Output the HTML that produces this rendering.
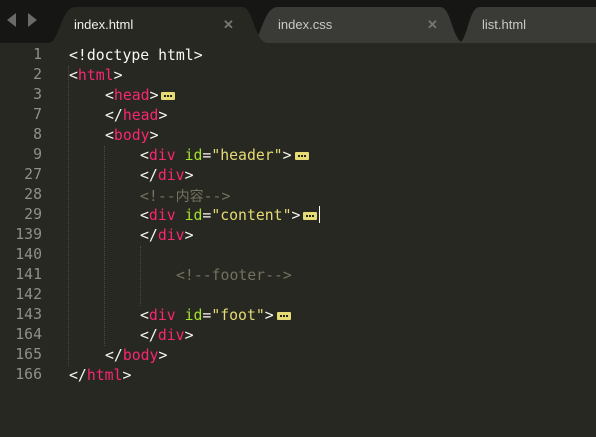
<!DOCTYPE html>
<html><head><style>
html,body{margin:0;padding:0;width:596px;height:437px;overflow:hidden;background:#272822;}
#top{position:absolute;left:0;top:0;width:596px;height:43px;background:#161614;}
.tab{position:absolute;top:7px;height:36px;font:13px "Liberation Sans",sans-serif;}
.tab svg{position:absolute;left:0;top:0}
.tab span{position:absolute;top:10px}
.x{font:bold 13px "Liberation Sans",sans-serif;color:#777;}
#code{position:absolute;left:0;top:46px;font:14.8px "DejaVu Sans Mono",monospace;color:#f8f8f2;}
.l{position:absolute;height:20px;line-height:20px;white-space:pre;}
.n{position:absolute;width:42px;text-align:right;color:#909089;height:20px;line-height:20px;font:14.8px "DejaVu Sans Mono",monospace;}
.t{color:#f92672}.a{color:#a6e22e}.s{color:#e6db74}.c{color:#75715e}
.f{display:inline-block;width:14px;height:8px;background:#e6db74;border-radius:1px;vertical-align:0px;margin-left:3px;position:relative}
.f::after{content:"";position:absolute;left:3px;top:3px;width:2px;height:2px;background:#272822;box-shadow:3px 0 #272822,6px 0 #272822}
.g{position:absolute;width:0;border-left:1px dotted #4a4a44;}
</style></head><body>
<div id="top"></div>
<svg style="position:absolute;left:0;top:0" width="60" height="40"><polygon points="7,20 16,13 16,27" fill="#6a6a66"/><polygon points="37,20 28,13 28,27" fill="#6a6a66"/></svg>
<div class="tab" style="left:458px;width:140px"><svg width="140" height="36"><path d="M0,36 C10,36 10,0 22,0 L140,0 L140,36 Z" fill="#3a3a37"/></svg><span style="left:24px;color:#c8c8c4">list.html</span></div>
<div class="tab" style="left:250px;width:215px"><svg width="215" height="36"><path d="M0,36 C12,36 12,0 28,0 L190,0 C202,0 202,36 215,36 Z" fill="#3a3a37"/></svg><span style="left:28px;color:#c8c8c4">index.css</span><span class="x" style="left:177px">✕</span></div>
<div class="tab" style="left:48px;width:220px"><svg width="220" height="36"><path d="M0,36 C12,36 12,0 28,0 L194,0 C206,0 206,36 220,36 Z" fill="#272822"/></svg><span style="left:26px;color:#f0f0ec">index.html</span><span class="x" style="left:175px">✕</span></div>
<div class="g" style="left:68px;top:66px;height:300px"></div>
<div class="g" style="left:104px;top:146px;height:200px"></div>
<div class="g" style="left:140px;top:246px;height:60px"></div>
<div id="code">
<div class="n" style="top:0">1</div><div class="l" style="left:69px;top:0">&lt;!doctype html&gt;</div>
<div class="n" style="top:20px">2</div><div class="l" style="left:69px;top:20px">&lt;<span class="t">html</span>&gt;</div>
<div class="n" style="top:40px">3</div><div class="l" style="left:105px;top:40px">&lt;<span class="t">head</span>&gt;<span class="f"></span></div>
<div class="n" style="top:60px">7</div><div class="l" style="left:105px;top:60px">&lt;/<span class="t">head</span>&gt;</div>
<div class="n" style="top:80px">8</div><div class="l" style="left:105px;top:80px">&lt;<span class="t">body</span>&gt;</div>
<div class="n" style="top:100px">9</div><div class="l" style="left:140px;top:100px">&lt;<span class="t">div</span> <span class="a">id</span>=<span class="s">"header"</span>&gt;<span class="f"></span></div>
<div class="n" style="top:120px">27</div><div class="l" style="left:140px;top:120px">&lt;/<span class="t">div</span>&gt;</div>
<div class="n" style="top:140px">28</div><div class="l c" style="left:140px;top:140px">&lt;!--<span style="font-family:'Noto Sans CJK SC',sans-serif;font-size:14px">内容</span>--&gt;</div>
<div class="n" style="top:160px">29</div><div class="l" style="left:140px;top:160px">&lt;<span class="t">div</span> <span class="a">id</span>=<span class="s">"content"</span>&gt;<span class="f"></span><span style="display:inline-block;width:1px;height:17px;background:#f8f8f0;vertical-align:-3px;margin-left:2px"></span></div>
<div class="n" style="top:180px">139</div><div class="l" style="left:140px;top:180px">&lt;/<span class="t">div</span>&gt;</div>
<div class="n" style="top:200px">140</div>
<div class="n" style="top:220px">141</div><div class="l c" style="left:176px;top:220px">&lt;!--footer--&gt;</div>
<div class="n" style="top:240px">142</div>
<div class="n" style="top:260px">143</div><div class="l" style="left:140px;top:260px">&lt;<span class="t">div</span> <span class="a">id</span>=<span class="s">"foot"</span>&gt;<span class="f"></span></div>
<div class="n" style="top:280px">164</div><div class="l" style="left:140px;top:280px">&lt;/<span class="t">div</span>&gt;</div>
<div class="n" style="top:300px">165</div><div class="l" style="left:105px;top:300px">&lt;/<span class="t">body</span>&gt;</div>
<div class="n" style="top:320px">166</div><div class="l" style="left:69px;top:320px">&lt;/<span class="t">html</span>&gt;</div>
</div>
</body></html>
